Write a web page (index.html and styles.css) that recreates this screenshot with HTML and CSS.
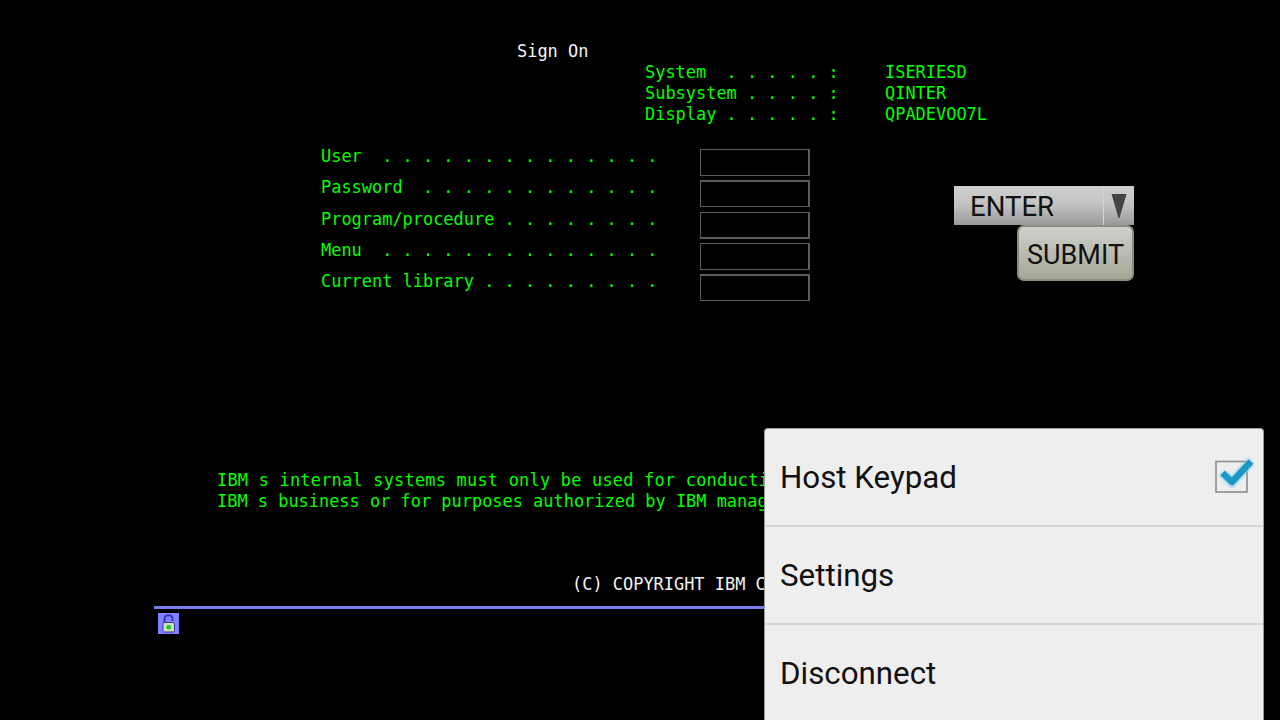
FILE: index.html
```html
<!DOCTYPE html>
<html lang="en">
<head>
<meta charset="utf-8">
<title>Sign On</title>
<link rel="stylesheet" href="styles.css">
</head>
<body>
<main class="screen">
  <h1 class="title">Sign On</h1>
  <dl class="sysinfo">
    <div class="info-row"><dt>System  . . . . . :</dt><dd>ISERIESD</dd></div>
    <div class="info-row"><dt>Subsystem . . . . :</dt><dd>QINTER</dd></div>
    <div class="info-row"><dt>Display . . . . . :</dt><dd>QPADEVOO7L</dd></div>
  </dl>
  <form class="login">
    <label class="login-row"><span class="login-label">User  . . . . . . . . . . . . . .</span><span class="field field-a"></span></label>
    <label class="login-row"><span class="login-label">Password  . . . . . . . . . . . .</span><span class="field field-b"></span></label>
    <label class="login-row"><span class="login-label">Program/procedure . . . . . . . .</span><span class="field field-c"></span></label>
    <label class="login-row"><span class="login-label">Menu  . . . . . . . . . . . . . .</span><span class="field field-a"></span></label>
    <label class="login-row"><span class="login-label">Current library . . . . . . . . .</span><span class="field field-b"></span></label>
  </form>
  <div class="notice">
    <p class="notice-wide">IBM s internal systems must only be used for conducting</p>
    <p class="notice-line">IBM s business or for purposes authorized by IBM management</p>
  </div>
  <p class="copyright">(C) COPYRIGHT IBM CORP. 1980, 2009.</p>
  <footer class="status">
    <span class="lock">
      <svg viewBox="0 0 21 21" width="21" height="21" aria-hidden="true">
        <path d="M6.5 10V5.5C6.5 3.3 8.2 2.3 10.5 2.3s4 1 4 3.2V8" fill="none" stroke="#2b2bc0" stroke-width="1.8"/>
        <rect x="5" y="9.5" width="11.5" height="9.5" rx="1.5" fill="#d4dcb0" stroke="#3a3ab8"/>
        <circle cx="10.7" cy="14.2" r="2.4" fill="#18d030"/>
      </svg>
    </span>
  </footer>
</main>

<aside class="keys">
  <div class="key-select">
    <span class="key-name">ENTER</span>
    <span class="key-arrow">
      <svg viewBox="0 0 16 26" width="16" height="26" aria-hidden="true"><path d="M0.5 1H15.5L8.5 25H7.5Z" fill="#444"/></svg>
    </span>
  </div>
  <button class="submit" type="button">SUBMIT</button>
</aside>

<nav class="menu">
  <div class="menu-item">
    <span>Host Keypad</span>
    <svg class="check" viewBox="0 0 40 40" width="40" height="40" aria-hidden="true">
      <defs>
        <filter id="glow" x="-30%" y="-30%" width="160%" height="160%"><feGaussianBlur stdDeviation="1.8"/></filter>
        <filter id="soft" x="-10%" y="-10%" width="120%" height="120%"><feGaussianBlur stdDeviation="0.5"/></filter>
      </defs>
      <rect x="2" y="7.5" width="31" height="30.5" fill="none" stroke="#8d8d8d" stroke-width="1.6" filter="url(#soft)"/>
      <path d="M8.5 19L18 28.5L37 7" fill="none" stroke="#7fd0ea" stroke-width="8" filter="url(#glow)"/>
      <path d="M8.5 19L18 28L37 7.5" fill="none" stroke="#1f97c6" stroke-width="6.5" filter="url(#soft)"/>
    </svg>
  </div>
  <div class="menu-item">Settings</div>
  <div class="menu-item">Disconnect</div>
</nav>
</body>
</html>
```
FILE: styles.css
```css
* { box-sizing: border-box; }
html, body { margin: 0; height: 100%; overflow: hidden; }
body {
  position: relative;
  width: 1280px;
  height: 720px;
  background: #000;
  font-family: "DejaVu Sans Mono", monospace;
  font-size: 16.95px;
  line-height: 21px;
  color: #00ff00;
}
.screen { padding: 41px 0 0 155px; display: flex; flex-direction: column; align-items: flex-start; }
.title { margin: 0 0 0 362px; font: inherit; color: #f4f4f4; white-space: pre; }
.sysinfo { margin: 0 0 0 490px; }
.info-row { display: flex; white-space: pre; }
.info-row dt { width: 240px; }
.info-row dd { margin: 0; }
.login { margin: 21px 0 0 166px; display: flex; flex-direction: column; }
.login-row { height: 31.25px; display: flex; align-items: flex-start; white-space: pre; }
.login-label { width: 379px; height: 21px; }
.field { width: 110px; height: 27px; margin-top: 3px; border: 1px solid #5c5c5c; border-right-width: 2px; display: block; }
.field-b { border-top-width: 2px; }
.field-c { border-bottom-width: 2px; }
.notice { margin: 168px 0 0 62px; }
.notice-wide, .notice-line { margin: 0; white-space: pre; }
.notice-wide { letter-spacing: 0.22px; }
.copyright { margin: 62px 0 0 417px; color: #f4f4f4; white-space: pre; }
.status { margin: 11px 0 0 -1px; width: 700px; height: 30px; border-top: 3px solid #767cea; padding: 4px 0 0 4px; }
.lock { display: block; width: 21px; height: 21px; background: #8080ff; }
.lock svg { display: block; }

.keys { position: absolute; left: 954px; top: 186px; width: 180px; display: flex; flex-direction: column; align-items: flex-end; }
.key-select {
  width: 180px; height: 39px; display: flex; color: #111;
  font-family: Roboto, sans-serif; font-size: 27.6px; line-height: 42px;
  background: linear-gradient(#cfcfcf, #c4c4c4 45%, #9a9a9a);
}
.key-name { flex: 1; padding-left: 16px; border-right: 1px solid #d4d4d4; }
.key-arrow { width: 30px; display: flex; justify-content: center; padding-top: 7px; }
.key-arrow svg { display: block; }
.submit {
  width: 117px; height: 56px; padding: 3px 0 0; color: #111;
  font-family: Roboto, sans-serif; font-size: 27px;
  border: 2px solid #8a8c7e; border-radius: 7px;
  background: linear-gradient(#cfd0cb, #a5a796);
}

.menu {
  position: absolute; left: 764px; top: 428px; width: 500px; height: 292px;
  background: rgba(240,240,240,.992);
  border: 1px solid #9a9a9a; border-bottom: 0; border-radius: 4px 4px 0 0;
  font-family: Roboto, sans-serif; font-size: 31.3px; color: #111;
}
.menu-item {
  height: 98px; padding: 0 9px 0 15px; display: flex; align-items: center; justify-content: space-between;
  border-bottom: 2px solid #d6d6d6;
}
.menu-item:last-child { border-bottom: 0; padding-bottom: 2px; }
.check { display: block; margin-top: -6px; }
```
